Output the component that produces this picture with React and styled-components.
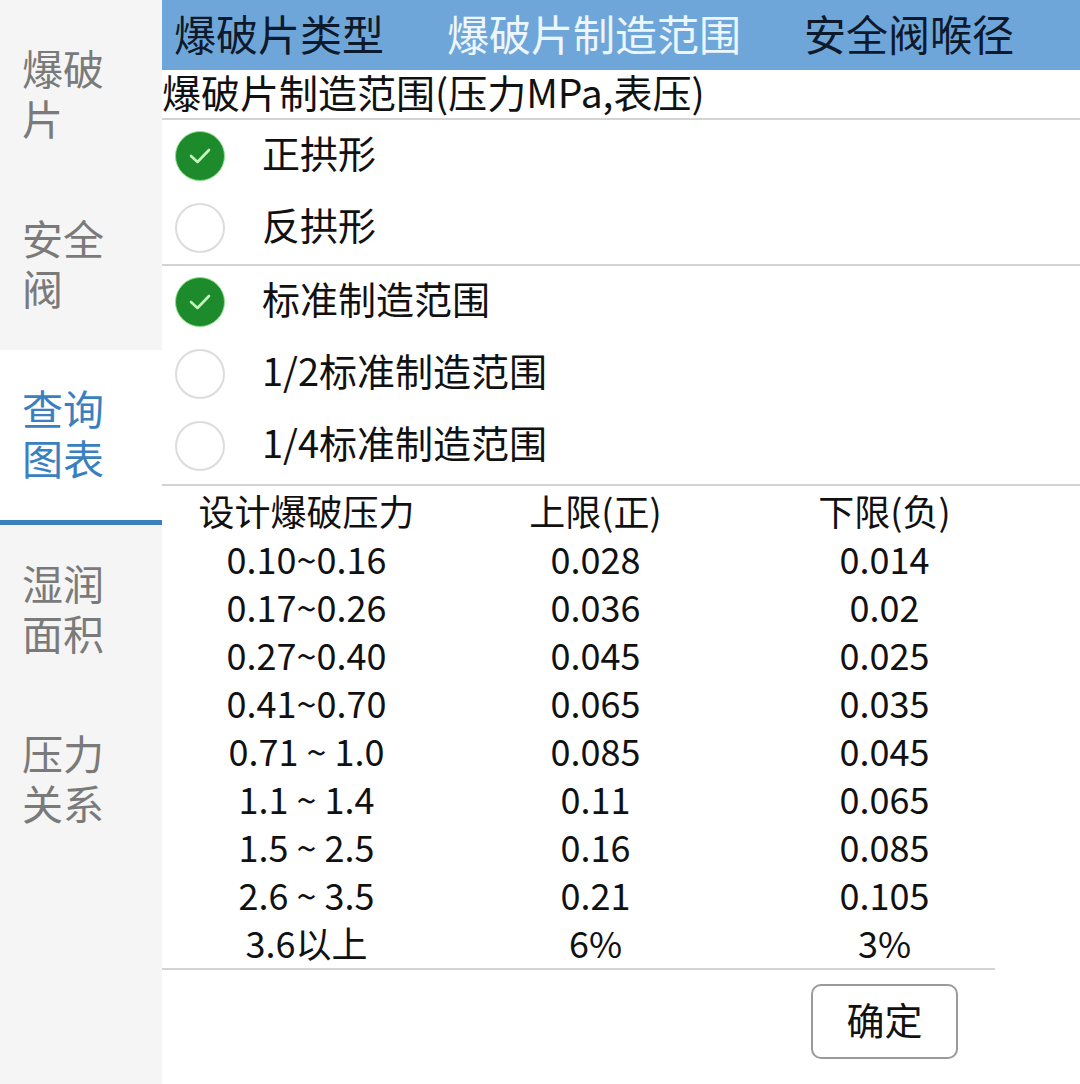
import React from 'react';
import styled, { createGlobalStyle } from 'styled-components';

const GlobalStyle = createGlobalStyle`
  html, body {
    margin: 0;
    padding: 0;
    background: #ffffff;
  }
  body {
    font-family: "Noto Sans CJK SC", "Noto Sans", sans-serif;
  }
`;

const Page = styled.div`
  display: flex;
  width: 1080px;
  height: 1084px;
  overflow: hidden;
`;

const Sidebar = styled.nav`
  width: 162px;
  flex-shrink: 0;
  background: #f5f5f5;
  padding-top: 10px;
  display: flex;
  flex-direction: column;
`;

const SideItem = styled.div`
  height: ${(p) => (p.$active ? '175px' : '170px')};
  display: flex;
  align-items: center;
  padding-left: 22px;
  padding-bottom: 6px;
  box-sizing: border-box;
  background: ${(p) => (p.$active ? '#ffffff' : 'transparent')};
  border-bottom: ${(p) => (p.$active ? '5px solid #3a7fc0' : 'none')};
`;

const SideText = styled.div`
  width: 84px;
  font-size: 41px;
  line-height: 50px;
  color: ${(p) => (p.$active ? '#3a7fc0' : '#7a7a7a')};
`;

const Main = styled.main`
  flex: 1;
  display: flex;
  flex-direction: column;
`;

const Tabs = styled.header`
  height: 70px;
  background: #6fa6d9;
  display: flex;
  align-items: center;
  padding-left: 12px;
  padding-bottom: 4px;
  box-sizing: border-box;
  gap: 63px;
`;

const Tab = styled.div`
  font-size: 42px;
  line-height: 1;
  color: ${(p) => (p.$active ? '#eef6fd' : '#0e1a2b')};
`;

const Subtitle = styled.div`
  height: 50px;
  display: flex;
  align-items: center;
  padding-bottom: 6px;
  box-sizing: border-box;
  font-size: 39px;
  color: #111;
  border-bottom: 2px solid #d3d3d3;
  white-space: nowrap;
`;

const Group = styled.div`
  display: flex;
  flex-direction: column;
  border-bottom: 2px solid #d3d3d3;
  padding-bottom: ${(p) => p.$pb || 0}px;
`;

const Option = styled.div`
  height: 72px;
  display: flex;
  align-items: center;
  padding-left: 13px;
  gap: 37px;
  font-size: 38px;
  color: #111;
`;

const Label = styled.span`
  padding-bottom: 10px;
`;

const Radio = styled.span`
  width: 50px;
  height: 50px;
  border-radius: 50%;
  box-sizing: border-box;
  display: flex;
  align-items: center;
  justify-content: center;
  flex-shrink: 0;
  background: ${(p) => (p.$on ? '#1d8a2c' : '#ffffff')};
  border: ${(p) => (p.$on ? '1px solid #8be08a' : '2px solid #dcdcdc')};
`;

const Table = styled.div`
  display: grid;
  grid-template-columns: repeat(3, 289px);
  grid-auto-rows: 48px;
  align-items: center;
  width: 833px;
  border-bottom: 2px solid #d3d3d3;
  padding-top: 2px;
`;

const Cell = styled.div`
  text-align: center;
  font-size: 36px;
  line-height: 48px;
  padding-bottom: 4px;
  color: #111;
  white-space: nowrap;
`;

const Footer = styled.div`
  display: flex;
  justify-content: flex-end;
  padding: 14px 122px 0 0;
`;

const Button = styled.button`
  width: 147px;
  height: 75px;
  box-sizing: border-box;
  border: 2px solid #9a9a9a;
  border-radius: 10px;
  background: #fff;
  font-family: inherit;
  font-size: 38px;
  color: #111;
  padding: 0 0 6px;
`;

const Check = () => (
  <svg width="24" height="20" viewBox="0 0 24 20">
    <path d="M3 10 L9.5 16 L21 4" fill="none" stroke="#c4f7bd" strokeWidth="2.6" strokeLinecap="round" strokeLinejoin="round" />
  </svg>
);

const sideItems = ['爆破片', '安全阀', '查询图表', '湿润面积', '压力关系'];

const rows = [
  ['设计爆破压力', '上限(正)', '下限(负)'],
  ['0.10~0.16', '0.028', '0.014'],
  ['0.17~0.26', '0.036', '0.02'],
  ['0.27~0.40', '0.045', '0.025'],
  ['0.41~0.70', '0.065', '0.035'],
  ['0.71 ~ 1.0', '0.085', '0.045'],
  ['1.1 ~ 1.4', '0.11', '0.065'],
  ['1.5 ~ 2.5', '0.16', '0.085'],
  ['2.6 ~ 3.5', '0.21', '0.105'],
  ['3.6以上', '6%', '3%'],
];

const App = () => {
  return (
    <Page>
      <GlobalStyle />
      <Sidebar>
        {sideItems.map((label, i) => (
          <SideItem key={label} $active={i === 2}>
            <SideText $active={i === 2}>{label}</SideText>
          </SideItem>
        ))}
      </Sidebar>
      <Main>
        <Tabs>
          <Tab>爆破片类型</Tab>
          <Tab $active>爆破片制造范围</Tab>
          <Tab>安全阀喉径</Tab>
        </Tabs>
        <Subtitle>爆破片制造范围(压力MPa,表压)</Subtitle>
        <Group>
          <Option>
            <Radio $on><Check /></Radio><Label>正拱形</Label>
          </Option>
          <Option>
            <Radio /><Label>反拱形</Label>
          </Option>
        </Group>
        <Group $pb={2}>
          <Option>
            <Radio $on><Check /></Radio><Label>标准制造范围</Label>
          </Option>
          <Option>
            <Radio /><Label>1/2标准制造范围</Label>
          </Option>
          <Option>
            <Radio /><Label>1/4标准制造范围</Label>
          </Option>
        </Group>
        <Table>
          {rows.map((r, i) =>
            r.map((c, j) => <Cell key={`${i}-${j}`}>{c}</Cell>)
          )}
        </Table>
        <Footer>
          <Button>确定</Button>
        </Footer>
      </Main>
    </Page>
  );
};

export default App;
